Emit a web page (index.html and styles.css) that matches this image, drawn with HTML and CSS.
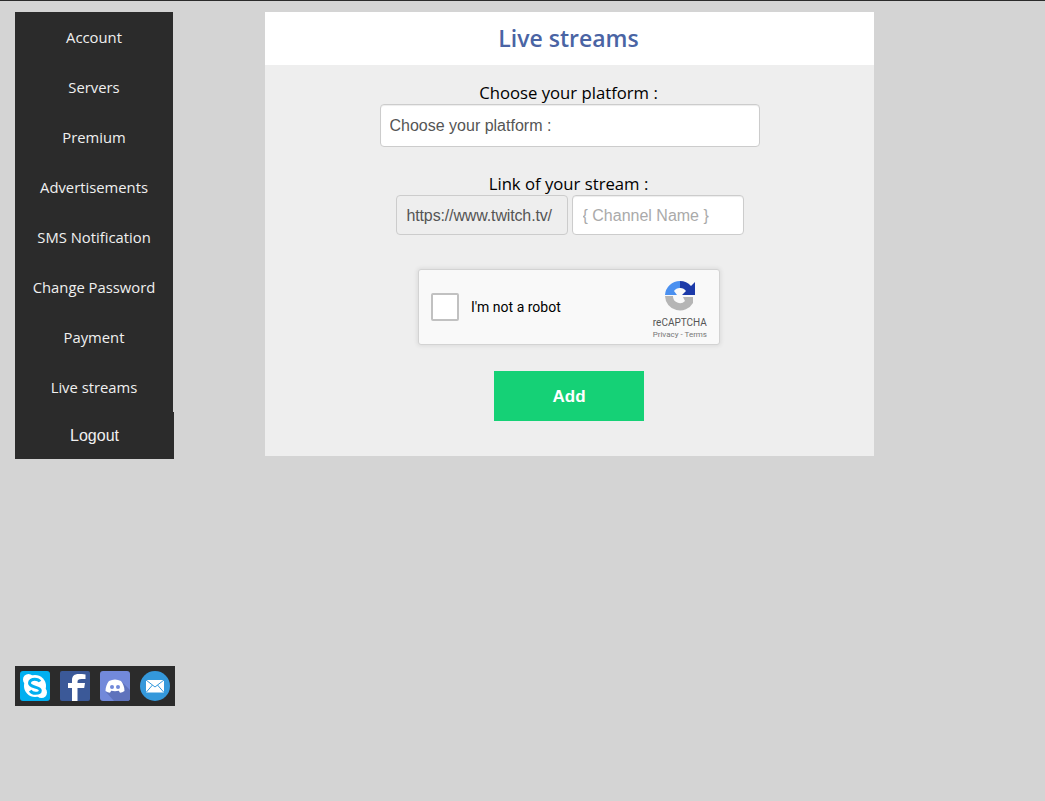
FILE: index.html
```html
<!DOCTYPE html>
<html lang="en">
<head>
  <meta charset="UTF-8" />
  <title>Live streams</title>
  <link rel="stylesheet" href="styles.css">
</head>
<body>
  <div class="page">
    <aside class="side">
      <ul class="menu">
        <li><a href="#">Account</a></li>
        <li><a href="#">Servers</a></li>
        <li><a href="#">Premium</a></li>
        <li><a href="#">Advertisements</a></li>
        <li><a href="#">SMS Notification</a></li>
        <li><a href="#">Change Password</a></li>
        <li><a href="#">Payment</a></li>
        <li><a href="#">Live streams</a></li>
      </ul>
      <a href="#" class="logout">Logout</a>

      <div class="social">
        <!-- skype -->
        <svg width="30" height="30" viewBox="0 0 30 30">
          <rect width="30" height="30" rx="3" fill="#00aff0"/>
          <circle cx="15" cy="15" r="11" fill="#fff"/>
          <circle cx="8.500" cy="8.500" r="5.500" fill="#fff"/>
          <circle cx="21.500" cy="21.500" r="5.500" fill="#fff"/>
          <path d="M20 10.500c-1-1.500-3-2.300-5.200-2.300-3 0-5.300 1.500-5.300 3.900 0 5 10.800 3 10.800 7.400 0 1.700-2 2.800-4.800 2.800-2.300 0-4.200-.9-5.300-2.700" fill="none" stroke="#00aff0" stroke-width="3"/>
        </svg>
        <!-- facebook -->
        <svg width="30" height="30" viewBox="0 0 30 30">
          <rect width="30" height="30" rx="2" fill="#3b5998"/>
          <path d="M12 30V17H8v-5h4V9C12 5 14.500 3 18.500 3c2.500 0 4.500.2 7 .4v4.600h-4c-3 0-4 1-4 2.800V12h7.500l-.8 5h-6.700v13z" fill="#fff"/>
        </svg>
        <!-- discord -->
        <svg width="30" height="30" viewBox="0 0 30 30">
          <rect width="30" height="30" rx="3" fill="#7289da"/>
          <path d="M21 10l9 9v8a3 3 0 0 1-3 3H14l-8-9z" fill="#5f73bc"/>
          <path d="M9 10c4-2 8-2 12 0 2 2.500 3.500 6 3.500 10-1.500 1-3 1.500-4.500 1.700l-1.200-2c-2.500.6-5.100.6-7.600 0l-1.200 2c-1.500-.2-3-.7-4.500-1.700C5.500 16 7 12.500 9 10z" fill="#fff"/>
          <circle cx="12" cy="16" r="2" fill="#7289da"/>
          <circle cx="18" cy="16" r="2" fill="#7289da"/>
        </svg>
        <!-- mail -->
        <svg width="30" height="30" viewBox="0 0 30 30">
          <circle cx="15" cy="15" r="15" fill="#3498db"/>
          <rect x="6" y="9" width="18" height="12.500" fill="#fff"/>
          <path d="M6 9l9 7 9-7M6 21.500l6.500-7.500M24 21.500L17.500 14" fill="none" stroke="#3498db" stroke-width="1"/>
        </svg>
      </div>
    </aside>

    <main class="panel">
      <h1 class="panel-title">Live streams</h1>
      <form class="stream-form">
        <label class="field-label">Choose your platform :</label>
        <select class="field platform">
          <option>Choose your platform :</option>
        </select>

        <label class="field-label link-label">Link of your stream :</label>
        <div class="link-row">
          <span class="prefix">https://www.twitch.tv/</span>
          <input class="field channel" type="text" placeholder="{ Channel Name }" />
        </div>

        <div class="captcha">
          <span class="captcha-box"></span>
          <span class="captcha-text">I'm not a robot</span>
          <div class="captcha-brand">
            <svg width="32" height="32" viewBox="0 0 32 32">
              <path d="M1 15A15 15 0 0 1 16 1v7a7 7 0 0 0-6 3l3 4z" fill="#4a90f0"/>
              <path d="M16 1a15 15 0 0 1 11 5l4-4v13H18l4-4a7 7 0 0 0-6-3z" fill="#1c3aa9"/>
              <path d="M1 16h8a7 7 0 0 0 12 5l-2-4h10v2L29 23A15 15 0 0 1 1 16z" fill="#b5b5b5"/>
            </svg>
            <span class="brand-name">reCAPTCHA</span>
            <span class="brand-links">Privacy - Terms</span>
          </div>
        </div>

        <button type="button" class="add-btn">Add</button>
      </form>
    </main>
  </div>
</body>
</html>
```

FILE: styles.css
```css
/* === Global === */
body {
  margin: 0;
  padding: 0;
  background-color: #d4d4d4;
  border-top: 1px solid #2b2b2b;
  font-family: "Open Sans", sans-serif;
}

.page {
  display: flex;
  align-items: flex-start;
  padding: 11px 0 0 15px;
}

/* === Sidebar === */
.side {
  width: 160px;
  margin-right: 90px;
}

.menu {
  list-style: none;
  margin: 0;
  padding: 0;
  width: 158px;
  background-color: #2b2b2b;
}

.menu li a {
  display: block;
  height: 50px;
  line-height: 50px;
  text-align: center;
  font-size: 14.8px;
  color: #f0f0f0;
  text-decoration: none;
}

.logout {
  display: block;
  width: 159px;
  height: 47px;
  line-height: 47px;
  text-align: center;
  font-family: "Liberation Sans", sans-serif;
  font-size: 16px;
  color: #f0f0f0;
  background-color: #2b2b2b;
  text-decoration: none;
}

.social {
  display: flex;
  gap: 10px;
  align-items: center;
  height: 40px;
  margin-top: 207px;
  padding-left: 5px;
  background-color: #2b2b2b;
}

/* === Main panel === */
.panel {
  width: 609px;
  height: 444px;
  background-color: #eee;
}

.panel-title {
  margin: 0;
  height: 53px;
  padding-right: 2px;
  line-height: 52px;
  text-align: center;
  font-size: 23px;
  font-weight: 600;
  color: #4a64a4;
  background-color: #fff;
}

.stream-form {
  display: flex;
  flex-direction: column;
  align-items: center;
  padding-top: 16px;
}

.field-label {
  margin-right: 2px;
  font-size: 16.7px;
  line-height: 23px;
  color: #000;
}

.link-label {
  margin-top: 25px;
}

.field {
  box-sizing: border-box;
  font-family: "Liberation Sans", sans-serif;
  font-size: 16px;
  background-color: #fff;
  border: 1px solid #ccc;
  border-radius: 4px;
  color: #555;
  box-shadow: inset 0 1px 1px rgba(0, 0, 0, 0.075);
}

.platform {
  width: 380px;
  height: 43px;
  padding: 0 9px;
  appearance: none;
}

.link-row {
  display: flex;
  gap: 4px;
}

.prefix {
  box-sizing: border-box;
  width: 172px;
  height: 40px;
  padding-left: 10px;
  line-height: 40px;
  font-family: "Liberation Sans", sans-serif;
  font-size: 16px;
  letter-spacing: -0.14px;
  color: #555;
  background-color: #eee;
  border: 1px solid #ccc;
  border-radius: 4px;
}

.channel {
  width: 172px;
  height: 40px;
  padding: 2px 10px 0;
}

.channel::placeholder {
  color: #aaa;
  opacity: 1;
}

/* === Captcha === */
.captcha {
  box-sizing: border-box;
  display: flex;
  align-items: center;
  width: 302px;
  height: 76px;
  margin: 34px 1px 0 0;
  padding: 0 12px;
  background-color: #f9f9f9;
  border: 1px solid #d3d3d3;
  border-radius: 3px;
  box-shadow: 0 0 4px 1px rgba(0, 0, 0, 0.08);
}

.captcha-box {
  box-sizing: border-box;
  width: 28px;
  height: 28px;
  background-color: #fff;
  border: 2px solid #c1c1c1;
  border-radius: 2px;
}

.captcha-text {
  margin-left: 12px;
  font-family: Roboto, sans-serif;
  font-size: 14px;
  color: #000;
}

.captcha-brand {
  display: flex;
  flex-direction: column;
  align-items: center;
  margin-left: auto;
  padding-top: 5px;
  font-family: Roboto, sans-serif;
  color: #555;
}

.brand-name {
  margin-top: 4px;
  font-size: 10px;
  line-height: 13px;
}

.brand-links {
  font-size: 8px;
  line-height: 11px;
  color: #777;
}

/* === Button === */
.add-btn {
  width: 150px;
  height: 50px;
  margin: 26px 1px 0 0;
  padding-top: 3px;
  font-family: "Liberation Sans", sans-serif;
  font-size: 17px;
  font-weight: bold;
  color: #fff;
  background-color: #15d176;
  border: none;
  cursor: pointer;
}
```
